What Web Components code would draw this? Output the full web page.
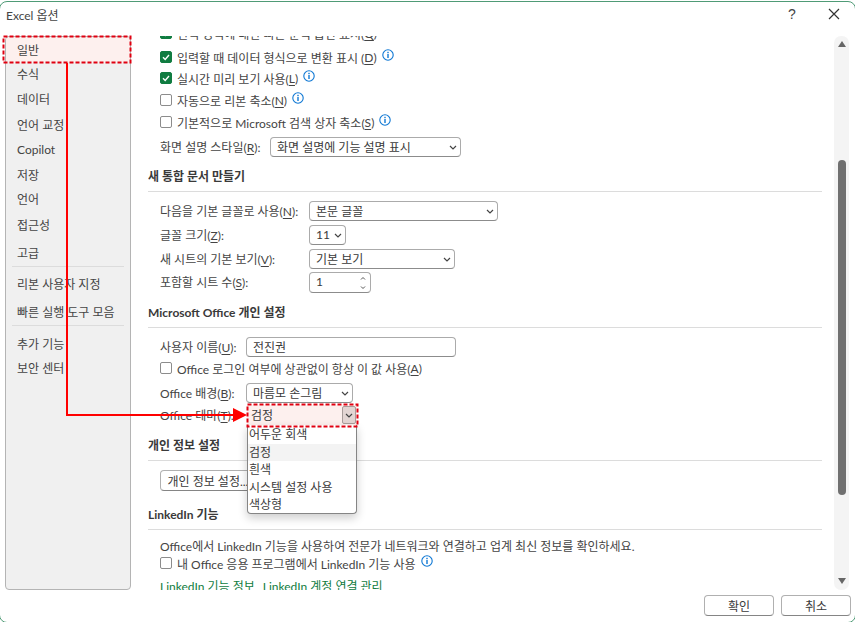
<!DOCTYPE html>
<html lang="ko">
<head>
<meta charset="utf-8">
<title>Excel 옵션</title>
<style>
  html, body { margin: 0; height: 100%; background: #fff; }
  body {
    font: 12px Lato, "Noto Sans CJK KR", "Noto Sans", sans-serif;
    color: #444;
    overflow: hidden;
  }
  u { text-underline-offset: 2px; }
  a { color: #107c41; text-decoration: none; margin-right: 8px; }
</style>
</head>
<body>

<excel-dialog heading="Excel 옵션">
  <nav-list slot="nav">
    <nav-item active style="height:25px;margin-bottom:-1px">일반</nav-item>
    <nav-item>수식</nav-item>
    <nav-item>데이터</nav-item>
    <nav-item style="margin-top:1px;margin-bottom:-1px">언어 교정</nav-item>
    <nav-item style="height:26px">Copilot</nav-item>
    <nav-item style="height:24px">저장</nav-item>
    <nav-item>언어</nav-item>
    <nav-item style="height:26px">접근성</nav-item>
    <nav-item style="margin-top:3px;height:25px">고급</nav-item>
    <nav-sep></nav-sep>
    <nav-item style="margin-top:3px;height:26px">리본 사용자 지정</nav-item>
    <nav-item style="margin-top:2px;height:26px">빠른 실행 도구 모음</nav-item>
    <nav-sep></nav-sep>
    <nav-item style="margin-top:5px;height:24px">추가 기능</nav-item>
    <nav-item>보안 센터</nav-item>
  </nav-list>

  <opt-row style="margin-top:-13px"><check-box checked></check-box>선택 영역에 대한 빠른 분석 옵션 표시(<u>Q</u>)</opt-row>
  <opt-row style="margin-top:4px"><check-box checked></check-box>입력할 때 데이터 형식으로 변환 표시 (<u>D</u>)<info-icon></info-icon></opt-row>
  <opt-row style="margin-top:1px"><check-box checked></check-box>실시간 미리 보기 사용(<u>L</u>)<info-icon></info-icon></opt-row>
  <opt-row style="margin-top:2px"><check-box></check-box>자동으로 리본 축소(<u>N</u>)<info-icon></info-icon></opt-row>
  <opt-row style="margin-top:2px"><check-box></check-box>기본적으로 Microsoft 검색 상자 축소(<u>S</u>)<info-icon></info-icon></opt-row>
  <opt-row style="margin-top:5px" label-width="110"><span slot="label">화면 설명 스타일(<u>R</u>):</span><drop-select width="191">화면 설명에 기능 설명 표시</drop-select></opt-row>

  <sec-head style="margin-top:10px">새 통합 문서 만들기</sec-head>
  <opt-row style="margin-top:9px" label-width="149"><span slot="label">다음을 기본 글꼴로 사용(<u>N</u>):</span><drop-select width="189">본문 글꼴</drop-select></opt-row>
  <opt-row style="margin-top:4px" label-width="149"><span slot="label">글꼴 크기(<u>Z</u>):</span><drop-select width="37">11</drop-select></opt-row>
  <opt-row style="margin-top:4px" label-width="149"><span slot="label">새 시트의 기본 보기(<u>V</u>):</span><drop-select width="146">기본 보기</drop-select></opt-row>
  <opt-row style="margin-top:3px;height:21px" label-width="149"><span slot="label">포함할 시트 수(<u>S</u>):</span><drop-select width="62" spin>1</drop-select></opt-row>

  <sec-head style="margin-top:10px">Microsoft Office 개인 설정</sec-head>
  <opt-row style="margin-top:9px" label-width="86"><span slot="label">사용자 이름(<u>U</u>):</span><drop-select width="210" plain>전진권</drop-select></opt-row>
  <opt-row style="margin-top:1px"><check-box></check-box>Office 로그인 여부에 상관없이 항상 이 값 사용(<u>A</u>)</opt-row>
  <opt-row style="margin-top:5px" label-width="86"><span slot="label">Office 배경(<u>B</u>):</span><drop-select width="107">마름모 손그림</drop-select></opt-row>
  <opt-row style="margin-top:2px" label-width="87"><span slot="label">Office 테마(<u>T</u>):</span>
    <drop-select width="110" open>검정
      <menu-item slot="menu">어두운 회색</menu-item>
      <menu-item slot="menu" current>검정</menu-item>
      <menu-item slot="menu">흰색</menu-item>
      <menu-item slot="menu">시스템 설정 사용</menu-item>
      <menu-item slot="menu">색상형</menu-item>
    </drop-select>
  </opt-row>

  <sec-head style="margin-top:11px">개인 정보 설정</sec-head>
  <opt-row style="margin-top:8px;height:22px"><push-button style="width:96px">개인 정보 설정...</push-button></opt-row>

  <sec-head style="margin-top:14px">LinkedIn 기능</sec-head>
  <opt-row style="margin-top:5px">Office에서 LinkedIn 기능을 사용하여 전문가 네트워크와 연결하고 업계 최신 정보를 확인하세요.</opt-row>
  <opt-row style="margin-top:-2px"><check-box></check-box>내 Office 응용 프로그램에서 LinkedIn 기능 사용<info-icon></info-icon></opt-row>
  <opt-row style="margin-top:2px"><a href="#">LinkedIn 기능 정보</a><a href="#">LinkedIn 계정 연결 관리</a></opt-row>

  <push-button slot="footer">확인</push-button>
  <push-button slot="footer">취소</push-button>
</excel-dialog>

<callout-overlay></callout-overlay>

<script>
class ExcelDialog extends HTMLElement {
  constructor() {
    super();
    const shadow = this.attachShadow({ mode: 'open' });
    shadow.innerHTML = `
      <style>
        :host { display: block; height: 622px; overflow: hidden; }
        .frame { margin: 1px -1px 0; height: 622px; display: flex; flex-direction: column; box-sizing: border-box;
                 border: 1px solid #4f9b76; border-radius: 8px; }
        .title { height: 34px; flex: none; display: flex; align-items: center; padding: 0 14px 10px 6px; box-sizing: border-box; }
        .title span { flex: 1; color: #444; }
        .title b { font: 14px "Liberation Sans", sans-serif; width: 42px; margin-right: 14px; text-align: center; color: #444; }
        .title svg { width: 14px; height: 14px; }
        .main { flex: none; height: 554px; display: flex; }
        .side { flex: none; width: 126px; margin-left: 5px; box-sizing: border-box; }
        .content { flex: none; width: 674px; margin-left: 17px; overflow: hidden; }
        .bar { flex: none; width: 15px; margin-left: 12px; background: #f4f4f4; border-radius: 7px;
               display: flex; flex-direction: column; align-items: center; padding: 5px 0; box-sizing: border-box; }
        .bar i { flex: none; width: 8px; height: 335px; margin-top: 113px; background: #707070; border-radius: 4px; }
        .bar svg { flex: none; width: 8px; height: 6px; }
        .bar svg:last-child { margin-top: auto; margin-bottom: 1px; }
        .foot { flex: 1; display: flex; justify-content: flex-end; align-items: flex-start; gap: 7px; padding: 5px 4px 0 0; }
      </style>
      <div class="frame">
        <div class="title">
          <span>${this.getAttribute('heading')}</span>
          <b>?</b>
          <svg viewBox="0 0 14 14"><path d="M2 2 12 12M12 2 2 12" stroke="#333" stroke-width="1.2" fill="none"/></svg>
        </div>
        <div class="main">
          <div class="side"><slot name="nav"></slot></div>
          <div class="content"><slot></slot></div>
          <div class="bar">
            <svg viewBox="0 0 8 6"><path d="M4 0 8 6H0Z" fill="#666"/></svg>
            <i></i>
            <svg viewBox="0 0 8 6"><path d="M0 0H8L4 6Z" fill="#666"/></svg>
          </div>
        </div>
        <div class="foot"><slot name="footer"></slot></div>
      </div>`;
  }
}
customElements.define('excel-dialog', ExcelDialog);

class NavList extends HTMLElement {
  constructor() {
    super();
    this.attachShadow({ mode: 'open' }).innerHTML = `
      <style>
        :host { display: block; height: 554px; box-sizing: border-box; background: #f0f0f0;
                border: 1px solid #b4b4b4; border-radius: 4px; overflow: hidden; }
      </style>
      <slot></slot>`;
  }
}
customElements.define('nav-list', NavList);

class NavItem extends HTMLElement {
  constructor() {
    super();
    this.attachShadow({ mode: 'open' }).innerHTML = `
      <style>
        :host { display: flex; align-items: center; height: 25px; padding-left: 11px; box-sizing: border-box; color: #444; }
        :host([active]) { background: #fdf0ee; border-radius: 3px; }
      </style>
      <slot></slot>`;
  }
}
customElements.define('nav-item', NavItem);

class NavSep extends HTMLElement {
  constructor() {
    super();
    this.attachShadow({ mode: 'open' }).innerHTML = `
      <style>:host { display: block; height: 1px; margin: 1px 6px 0; background: #dcdcdc; }</style>`;
  }
}
customElements.define('nav-sep', NavSep);

class SecHead extends HTMLElement {
  constructor() {
    super();
    this.attachShadow({ mode: 'open' }).innerHTML = `
      <style>
        :host { display: block; height: 25px; box-sizing: border-box; border-bottom: 1px solid #dcdcdc;
                font-weight: 700; line-height: 20px; color: #3a3a3a; }
      </style>
      <slot></slot>`;
  }
}
customElements.define('sec-head', SecHead);

class OptRow extends HTMLElement {
  constructor() {
    super();
    const w = this.getAttribute('label-width');
    this.attachShadow({ mode: 'open' }).innerHTML = `
      <style>
        :host { display: flex; align-items: center; height: 20px; padding-left: 12px; white-space: nowrap; }
        .label { flex: none; width: ${w ? w + 'px' : 'auto'}; margin-top: -2px; }
      </style>
      <div class="label"><slot name="label"></slot></div>
      <slot></slot>`;
  }
}
customElements.define('opt-row', OptRow);

class CheckBox extends HTMLElement {
  constructor() {
    super();
    const on = this.hasAttribute('checked');
    this.attachShadow({ mode: 'open' }).innerHTML = `
      <style>
        :host { flex: none; display: block; width: 12px; height: 12px; margin-right: 5px; box-sizing: border-box;
                border: 1px solid #8c8c8c; border-radius: 2px; background: #fff; }
        :host([checked]) { background: #107c41; border-color: #107c41; }
        svg { display: block; width: 10px; height: 10px; }
      </style>
      ${on ? '<svg viewBox="0 0 10 10"><path d="M2 5.2 4.2 7.4 8 3" fill="none" stroke="#fff" stroke-width="1.4"/></svg>' : ''}`;
  }
}
customElements.define('check-box', CheckBox);

class InfoIcon extends HTMLElement {
  constructor() {
    super();
    this.attachShadow({ mode: 'open' }).innerHTML = `
      <style>
        :host { flex: none; display: block; width: 12px; height: 12px; margin: -4px 0 0 5px; }
        svg { display: block; }
      </style>
      <svg width="12" height="12" viewBox="0 0 12 12">
        <circle cx="6" cy="6" r="5.2" fill="#fff" stroke="#0f78d4" stroke-width="1.1"/>
        <rect x="5.3" y="5" width="1.4" height="4" fill="#0f78d4"/>
        <rect x="5.3" y="2.8" width="1.4" height="1.4" fill="#0f78d4"/>
      </svg>`;
  }
}
customElements.define('info-icon', InfoIcon);

class DropSelect extends HTMLElement {
  constructor() {
    super();
    const spin = this.hasAttribute('spin');
    const plain = this.hasAttribute('plain');
    const open = this.hasAttribute('open');
    const chevron = '<svg class="ch" viewBox="0 0 8 5"><path d="M1 1 4 4 7 1" fill="none" stroke="#444" stroke-width="1.2"/></svg>';
    const spinner = '<svg class="sp" viewBox="0 0 8 16"><path d="M2 4.5 4 2.5 6 4.5M2 11.5 4 13.5 6 11.5" fill="none" stroke="#555"/></svg>';
    this.attachShadow({ mode: 'open' }).innerHTML = `
      <style>
        :host { flex: none; position: relative; display: block; width: ${this.getAttribute('width')}px; height: 100%; }
        .box { display: flex; align-items: center; height: 100%; box-sizing: border-box; padding: 0 3px 0 6px;
               border: 1px solid #ababab; border-bottom-color: #8c8c8c; border-radius: 4px; background: #fff; color: #3a3a3a; }
        .text { flex: 1; margin-top: -2px; }
        .ch { width: 8px; height: 5px; flex: none; }
        .sp { width: 8px; height: 16px; flex: none; }
        :host([open]) .box { background: #fdf0ee; border: 0; border-radius: 0; padding: 0 1px 0 4px; }
        .btn { flex: none; width: 14px; height: 18px; display: flex; align-items: center; justify-content: center;
               background: #e3d5d3; border: 1px solid #a89c9a; border-radius: 2px; box-sizing: border-box; }
        .menu { position: absolute; left: 0; right: 0; top: 100%; height: 89px; box-sizing: border-box; padding-top: 1px;
                background: #fff; border: 1px solid #858585; border-top: 0; border-radius: 0 0 4px 4px;
                box-shadow: 0 4px 10px rgba(0,0,0,.2); }
      </style>
      <div class="box">
        <span class="text"><slot></slot></span>
        ${plain ? '' : spin ? spinner : open ? `<span class="btn">${chevron}</span>` : chevron}
      </div>
      ${open ? '<div class="menu"><slot name="menu"></slot></div>' : ''}`;
  }
}
customElements.define('drop-select', DropSelect);

class MenuItem extends HTMLElement {
  constructor() {
    super();
    this.attachShadow({ mode: 'open' }).innerHTML = `
      <style>
        :host { display: block; height: 17.5px; line-height: 17.5px; padding-left: 1px; color: #3a3a3a; }
        :host([current]) { background: #f3f3f3; }
      </style>
      <slot></slot>`;
  }
}
customElements.define('menu-item', MenuItem);

class PushButton extends HTMLElement {
  constructor() {
    super();
    this.attachShadow({ mode: 'open' }).innerHTML = `
      <style>
        :host { display: flex; align-items: center; justify-content: center; width: 70px; height: 21px; flex: none;
                box-sizing: border-box; background: #fff; color: #3a3a3a; white-space: nowrap;
                border: 1px solid #b0b0b0; border-bottom-color: #858585; border-radius: 4px; }
      </style>
      <slot></slot>`;
  }
}
customElements.define('push-button', PushButton);

// red annotation drawn over the screenshot
class CalloutOverlay extends HTMLElement {
  constructor() {
    super();
    this.attachShadow({ mode: 'open' }).innerHTML = `
      <style>
        :host { position: absolute; left: 0; top: 0; width: 855px; height: 622px; pointer-events: none; }
        svg { display: block; }
      </style>
      <svg width="855" height="622" viewBox="0 0 855 622">
        <path d="M67 63V415H234" fill="none" stroke="#f00" stroke-width="2"/>
        <path d="M233 408 247 415 233 422Z" fill="#f00"/>
        <rect x="3.5" y="36.5" width="127" height="26" fill="none" stroke="#e00010" stroke-width="2" stroke-dasharray="4 2"/>
        <rect x="247.5" y="404.5" width="110" height="22" fill="none" stroke="#e00010" stroke-width="2" stroke-dasharray="4 2"/>
      </svg>`;
  }
}
customElements.define('callout-overlay', CalloutOverlay);
</script>
</body>
</html>
